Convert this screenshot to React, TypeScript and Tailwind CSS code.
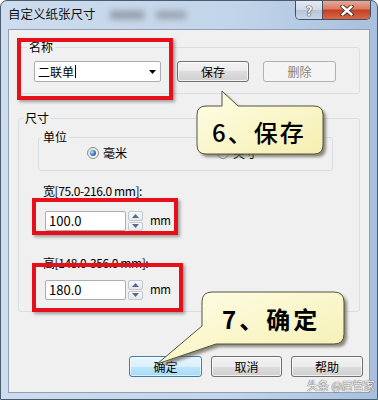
import React from "react";

const ui = "font-['Noto_Sans_CJK_SC','Microsoft_YaHei',sans-serif]";

function WinButton({
	label,
	width,
	variant = "normal",
}: {
	label: string;
	width: string;
	variant?: "normal" | "disabled" | "default";
}) {
	const skin =
		variant === "disabled"
			? "border-[#adb2b5] bg-[#f4f4f4] text-[#838383]"
			: variant === "default"
				? "border-[#3c7fb1] bg-[linear-gradient(#eaf6fd_0%,#d9f0fc_50%,#bee6fd_50%,#a7d9f5_100%)] text-black shadow-[inset_0_0_0_1px_rgba(255,255,255,0.6)]"
				: "border-[#707070] bg-[linear-gradient(#f2f2f2_0%,#ebebeb_50%,#dddddd_50%,#cfcfcf_100%)] text-black shadow-[inset_0_0_0_1px_rgba(255,255,255,0.7)]";
	return (
		<div
			className={`flex h-[21px] shrink-0 items-center justify-center rounded-[3px] border text-[12px] ${width} ${skin}`}
		>
			{label}
		</div>
	);
}

function Spinner() {
	const half =
		"flex flex-1 items-center justify-center rounded-[2px] border border-[#c2c7cf] bg-[linear-gradient(#fafafa,#e4e7eb)]";
	return (
		<div className="ml-[2px] flex h-[20px] w-[15px] shrink-0 flex-col gap-px">
			<div className={half}>
				<svg width="7" height="4" viewBox="0 0 7 4">
					<path d="M0 4 L3.5 0 L7 4 Z" fill="#56698a" />
				</svg>
			</div>
			<div className={half}>
				<svg width="7" height="4" viewBox="0 0 7 4">
					<path d="M0 0 L3.5 4 L7 0 Z" fill="#56698a" />
				</svg>
			</div>
		</div>
	);
}

function SpinEdit({ value }: { value: string }) {
	return (
		<div className="flex items-center">
			<div className="flex h-[20px] w-[81px] items-center rounded-[2px] border border-[#abadb3] bg-white pl-[3px] text-[13px]">
				{value}
			</div>
			<Spinner />
			<span className="ml-[7px] text-[11.5px] tracking-[-0.3px]">mm</span>
		</div>
	);
}

function Radio({ checked }: { checked?: boolean }) {
	return (
		<span className="flex h-[12px] w-[12px] shrink-0 items-center justify-center rounded-full border border-[#8e8f8f] bg-[linear-gradient(135deg,#dcdcdc,#fbfbfb)]">
			{checked && (
				<span className="h-[6px] w-[6px] rounded-full bg-[radial-gradient(circle_at_35%_35%,#b9e1fb,#2c6cb0_60%,#1b4d8a)]" />
			)}
		</span>
	);
}

function Callout6() {
	return (
		<>
			<svg
				className="absolute left-[190px] top-[86px]"
				width="145"
				height="80"
				viewBox="0 0 145 80"
			>
				<defs>
					<linearGradient id="y1" x1="0" y1="0" x2="1" y2="1">
						<stop offset="0" stopColor="#fffee8" />
						<stop offset="1" stopColor="#f5efb0" />
					</linearGradient>
					<filter id="s1">
						<feGaussianBlur stdDeviation="1.4" />
					</filter>
				</defs>
				<path
					d="M16 20 L32 20 L32 5 L48 20 L124 20 Q133 20 133 29 L133 59 Q133 68 124 68 L16 68 Q7 68 7 59 L7 29 Q7 20 16 20 Z"
					transform="translate(3 3)"
					fill="#5e5b48"
					opacity="0.7"
					filter="url(#s1)"
				/>
				<path
					d="M16 20 L32 20 L32 5 L48 20 L124 20 Q133 20 133 29 L133 59 Q133 68 124 68 L16 68 Q7 68 7 59 L7 29 Q7 20 16 20 Z"
					fill="url(#y1)"
					stroke="#55533f"
					strokeWidth="1"
				/>
			</svg>
			<div className="absolute left-[212px] top-[117px] text-[24px] font-medium leading-[30px] tracking-[2px] text-black">
				6、保存
			</div>
		</>
	);
}

function Callout7() {
	return (
		<>
			<svg
				className="absolute left-[150px] top-[286px]"
				width="200"
				height="85"
				viewBox="0 0 200 85"
			>
				<defs>
					<linearGradient id="y2" x1="0" y1="0" x2="1" y2="1">
						<stop offset="0" stopColor="#fffee8" />
						<stop offset="1" stopColor="#f5efb0" />
					</linearGradient>
					<filter id="s2">
						<feGaussianBlur stdDeviation="1.4" />
					</filter>
				</defs>
				<path
					d="M62 6 L184 6 Q194 6 194 16 L194 48 Q194 58 184 58 L66 58 L7 78 L52 40 L52 16 Q52 6 62 6 Z"
					transform="translate(3 3)"
					fill="#5e5b48"
					opacity="0.7"
					filter="url(#s2)"
				/>
				<path
					d="M62 6 L184 6 Q194 6 194 16 L194 48 Q194 58 184 58 L66 58 L7 78 L52 40 L52 16 Q52 6 62 6 Z"
					fill="url(#y2)"
					stroke="#55533f"
					strokeWidth="1"
				/>
			</svg>
			<div className="absolute left-[222px] top-[304px] text-[24px] font-bold leading-[30px] tracking-[3px] text-black">
				7、确定
			</div>
		</>
	);
}

export default function App() {
	const redBox =
		"absolute border-[4px] border-[#e5101a] shadow-[2px_2px_3px_rgba(0,0,0,0.35)]";

	return (
		<div className={`relative h-[400px] w-[378px] overflow-hidden bg-white ${ui}`}>
			<div className="flex h-full flex-col rounded-t-[7px] border border-[#4d5b6e] bg-[linear-gradient(90deg,#cddcee_0%,#c3d5ea_60%,#a8c0de_100%)]">
				{/* Title bar */}
				<div className="flex h-[28px] shrink-0 items-start">
					<span className="ml-[7px] mt-[5px] text-[12.5px] leading-[16px] text-[#111]">
						自定义纸张尺寸
					</span>
					<span className="ml-[14px] mt-[10px] h-[8px] w-[34px] bg-[#8f9aa8] blur-[3px]" />
					<span className="ml-[12px] mt-[10px] h-[8px] w-[30px] bg-[#98a3b0] blur-[3px]" />
					<div className="ml-auto mr-[6px] flex h-[19px] overflow-hidden rounded-b-[5px] border border-t-0 border-[#44505f]">
						<div className="flex w-[27px] items-center justify-center border-r border-[#44505f] bg-[linear-gradient(#e4eaf2_0%,#cfd9e6_50%,#b5c4d6_50%,#c9d6e6_100%)] text-[13px] font-bold leading-none text-white [text-shadow:0_0_1px_#333,0_0_1px_#333,0_0_1px_#333]">
							?
						</div>
						<div className="flex w-[47px] items-center justify-center bg-[linear-gradient(#e9a996_0%,#d77a63_45%,#c43e22_50%,#d66a45_100%)]">
							<svg width="14" height="11" viewBox="0 0 14 11">
								<path
									d="M2.5 1.5 L11.5 9.5 M11.5 1.5 L2.5 9.5"
									stroke="#3a2a28"
									strokeWidth="4.2"
									strokeLinecap="round"
								/>
								<path
									d="M2.5 1.5 L11.5 9.5 M11.5 1.5 L2.5 9.5"
									stroke="#ffffff"
									strokeWidth="2.4"
									strokeLinecap="round"
								/>
							</svg>
						</div>
					</div>
				</div>

				{/* Frame + client */}
				<div className="flex flex-1 px-[7px]">
					<div className="flex flex-1 flex-col border border-[#8e9fb6] bg-[#f0f0f0] text-black">
						{/* 名称 */}
						<fieldset className="mx-[9px] mt-[9px] h-[55px] rounded-[3px] border border-[#d5dfe5]">
							<legend className="ml-[8px] px-[2px] text-[12px] leading-[16px]">
								名称
							</legend>
							<div className="mt-[6px] flex items-center pl-[15px]">
								<div className="relative flex h-[21px] w-[127px] items-center rounded-[2px] border border-[#abadb3] bg-white pl-[3px] text-[12px]">
									二联单
									<span className="ml-px h-[13px] w-px bg-black" />
									<svg
										className="absolute right-[4px] top-[8px]"
										width="7"
										height="4"
										viewBox="0 0 7 4"
									>
										<path d="M0 0 L7 0 L3.5 4 Z" fill="#000" />
									</svg>
								</div>
								<div className="ml-[16px]">
									<WinButton label="保存" width="w-[72px]" />
								</div>
								<div className="ml-[14px]">
									<WinButton label="删除" width="w-[73px]" variant="disabled" />
								</div>
							</div>
						</fieldset>

						{/* 尺寸 */}
						<fieldset className="mx-[9px] mt-[16px] h-[202px] rounded-[3px] border border-[#d5dfe5]">
							<legend className="ml-[4px] px-[2px] text-[12px] leading-[16px]">
								尺寸
							</legend>
							<fieldset className="ml-[19px] mt-[3px] h-[42px] w-[295px] rounded-[3px] border border-[#d5dfe5]">
								<legend className="ml-[2px] px-[2px] text-[12px] leading-[16px]">
									单位
								</legend>
								<div className="flex h-[16px] items-center text-[12px]">
									<span className="ml-[48px]">
										<Radio checked />
									</span>
									<span className="ml-[4px]">毫米</span>
									<span className="ml-[90px]">
										<Radio />
									</span>
									<span className="ml-[4px]">英寸</span>
								</div>
							</fieldset>

							<div className="ml-[24px] mt-[12px] text-[12px] leading-[16px] tracking-[-0.4px]">
								宽[75.0-216.0 mm]:
							</div>
							<div className="ml-[26px] mt-[12px]">
								<SpinEdit value="100.0" />
							</div>

							<div className="ml-[24px] mt-[24px] text-[12px] leading-[16px] tracking-[-0.4px]">
								高[148.0-356.0 mm]:
							</div>
							<div className="ml-[26px] mt-[9px]">
								<SpinEdit value="180.0" />
							</div>
						</fieldset>

						{/* Buttons */}
						<div className="mt-[44px] flex justify-end gap-[9px] pr-[6px]">
							<WinButton label="确定" width="w-[73px]" variant="default" />
							<WinButton label="取消" width="w-[71px]" />
							<WinButton label="帮助" width="w-[72px]" />
						</div>
					</div>
				</div>
				<div className="h-[6px] shrink-0" />
			</div>

			{/* Annotations */}
			<div className={`${redBox} left-[17px] top-[38px] h-[62px] w-[156px]`} />
			<div className={`${redBox} left-[32px] top-[198px] h-[37px] w-[146px]`} />
			<div className={`${redBox} left-[32px] top-[263px] h-[49px] w-[151px]`} />

			<Callout6 />
			<Callout7 />

			<div className="absolute left-[307px] top-[378px] text-[11px] leading-[14px] text-[#f4f4f4] [text-shadow:0_0_1px_#555,0_0_1px_#555]">
				头条 @居管家
			</div>
		</div>
	);
}
